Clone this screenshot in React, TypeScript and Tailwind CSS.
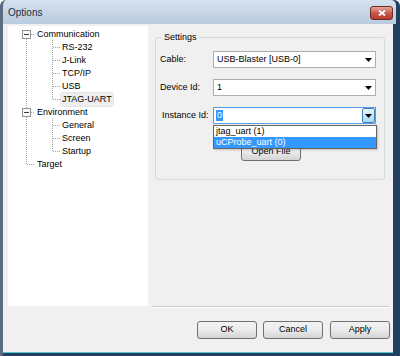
const FONT = "font-['Liberation_Sans',Arial,sans-serif]";

type TreeRow = { label: string; level: 0 | 1; selected?: boolean };

const TREE: TreeRow[] = [
  { label: "Communication", level: 0 },
  { label: "RS-232", level: 1 },
  { label: "J-Link", level: 1 },
  { label: "TCP/IP", level: 1 },
  { label: "USB", level: 1 },
  { label: "JTAG-UART", level: 1, selected: true },
  { label: "Environment", level: 0 },
  { label: "General", level: 1 },
  { label: "Screen", level: 1 },
  { label: "Startup", level: 1 },
  { label: "Target", level: 0 },
];

const rowY = (i: number) => 8.5 + 13 * i;

function TreeLines() {
  const dot = { stroke: "#a3a3a3", strokeWidth: 1, strokeDasharray: "1 1" };
  const childRows = [1, 2, 3, 4, 5, 7, 8, 9];
  return (
    <svg className="absolute inset-0" width={140} height={280}>
      {/* root line */}
      <line x1={18.5} y1={13} x2={18.5} y2={82} {...dot} />
      <line x1={18.5} y1={91} x2={18.5} y2={139} {...dot} />
      <line x1={23} y1={rowY(0)} x2={27} y2={rowY(0)} {...dot} />
      <line x1={23} y1={rowY(6)} x2={27} y2={rowY(6)} {...dot} />
      <line x1={19} y1={rowY(10)} x2={27} y2={rowY(10)} {...dot} />
      {/* children */}
      <line x1={44.5} y1={14} x2={44.5} y2={rowY(5) + 0.5} {...dot} />
      <line x1={44.5} y1={92} x2={44.5} y2={rowY(9) + 0.5} {...dot} />
      {childRows.map((i) => (
        <line key={i} x1={45} y1={rowY(i)} x2={52} y2={rowY(i)} {...dot} />
      ))}
      {/* expand boxes */}
      {[0, 6].map((i) => (
        <g key={i}>
          <rect x={14.5} y={rowY(i) - 4} width={8} height={8} fill="#fafafa" stroke="#939393" />
          <line x1={16} y1={rowY(i)} x2={21} y2={rowY(i)} stroke="#3a3a3a" />
        </g>
      ))}
    </svg>
  );
}

function Arrow() {
  return (
    <svg width={7} height={4} viewBox="0 0 7 4">
      <polygon points="0,0 7,0 3.5,4" fill="#000" />
    </svg>
  );
}

function Combo({ value, focused }: { value: string; focused?: boolean }) {
  return (
    <div
      className={`w-[163px] h-[17px] bg-white border flex items-center ${
        focused ? "border-[#569de5]" : "border-[#abadb3]"
      }`}
    >
      <div className="flex-1 pl-[2px] flex items-center">
        {focused ? (
          <span className="bg-[#3399ff] text-white px-[1px] leading-[11px]">{value}</span>
        ) : (
          <span className="pl-[1px]">{value}</span>
        )}
      </div>
      {focused ? (
        <div className="w-[13px] h-[15px] border border-[#3c7fb1] rounded-[2px] bg-linear-to-b from-[#eaf6fd] to-[#a7d9f5] flex items-center justify-center">
          <Arrow />
        </div>
      ) : (
        <div className="w-[13px] h-[15px] flex items-center justify-center">
          <Arrow />
        </div>
      )}
    </div>
  );
}

function PushButton({ label, className = "" }: { label: string; className?: string }) {
  return (
    <div
      className={`w-[60px] h-[18px] rounded-[3px] border border-[#707070] bg-linear-to-b from-[#f2f2f2] via-[#ebebeb] to-[#d4d4d4] flex items-center justify-center text-black ${className}`}
    >
      {label}
    </div>
  );
}

export default function App() {
  return (
    <div
      className={`${FONT} w-[400px] h-[356px] overflow-hidden bg-[#22405f] border-l-[3px] border-l-[#5b6b81] rounded-t-[6px] flex flex-col text-[9px] text-black`}
    >
      {/* title bar */}
      <div className="h-[24px] mr-[4px] rounded-tr-[5px] bg-linear-to-b from-[#d5e2ef] to-[#b9cbde] flex items-center justify-between">
        <span className="pl-[5px] text-[10px] text-[#1b2d45]">Options</span>
        <div className="w-[23px] h-[14px] mr-[3px] mt-[1px] rounded-[3px] border border-[#6e2b24] bg-linear-to-b from-[#e3a89e] via-[#c9594c] to-[#b83a2c] flex items-center justify-center">
          <svg width={8} height={6} viewBox="0 0 8 6">
            <path d="M1 0.5 L7 5.5 M7 0.5 L1 5.5" stroke="#fff" strokeWidth={1.8} />
          </svg>
        </div>
      </div>

      {/* client area */}
      <div className="h-[328px] mr-[7px] bg-[#f0f0f0] flex flex-col">
        <div className="flex pt-[2px] pl-[5px]">
          {/* tree */}
          <div className="relative w-[140px] h-[280px] bg-white pt-[2px]">
            <TreeLines />
            <div className="relative flex flex-col">
              {TREE.map((r) => (
                <div
                  key={r.label}
                  className={`h-[13px] flex items-center whitespace-nowrap ${r.level === 0 ? "pl-[28px]" : "pl-[53px]"}`}
                >
                  <span
                    className={`px-[1px] h-[13px] flex items-center ${
                      r.selected ? "bg-[#eeeeee] outline outline-[#e4e4e4] rounded-[2px]" : ""
                    }`}
                  >
                    {r.label}
                  </span>
                </div>
              ))}
            </div>
          </div>

          {/* right side */}
          <div className="w-[241px] ml-[4px] h-[282px] flex flex-col">
            <div className="relative mt-[11px] ml-[3px] w-[230px] h-[143px] border border-[#d3d9df] rounded-[3px] pt-[13px]">
              <span className="absolute -top-[7px] left-[6px] px-[2px] bg-[#f0f0f0] leading-[12px]">Settings</span>

              <div className="flex flex-col gap-[11px]">
                <div className="h-[17px] flex items-center">
                  <span className="w-[57px] pl-[4px]">Cable:</span>
                  <Combo value="USB-Blaster [USB-0]" />
                </div>
                <div className="h-[17px] flex items-center">
                  <span className="w-[57px] pl-[4px]">Device Id:</span>
                  <Combo value="1" />
                </div>
                <div className="h-[17px] flex items-center">
                  <span className="w-[57px] pl-[6px]">Instance Id:</span>
                  <Combo value="0" focused />
                </div>
              </div>

              <PushButton label="Open File" className="mt-[19px] ml-[85px]" />

              {/* open dropdown list */}
              <div className="absolute left-[57px] top-[87px] w-[164px] bg-white border border-[#646464] flex flex-col shadow-[1px_1px_2px_rgba(0,0,0,0.2)]">
                <div className="h-[11px] pl-[2px] flex items-center">jtag_uart (1)</div>
                <div className="h-[11px] pl-[2px] flex items-center bg-[#3399ff] text-white">uCProbe_uart (0)</div>
              </div>
            </div>
            <div className="flex-1" />
            <div className="h-[1px] mr-[3px] bg-[#c9c9c9]" />
            <div className="h-[1px] mr-[3px] bg-white" />
          </div>
        </div>

        {/* dialog buttons */}
        <div className="mt-[13px] pr-[3px] flex justify-end gap-[6px]">
          <PushButton label="OK" />
          <PushButton label="Cancel" />
          <PushButton label="Apply" className="ml-[1px]" />
        </div>
      </div>

      <div className="h-[1px] mr-[7px] bg-[#57c6d6]" />
      <div className="flex-1" />
    </div>
  );
}
